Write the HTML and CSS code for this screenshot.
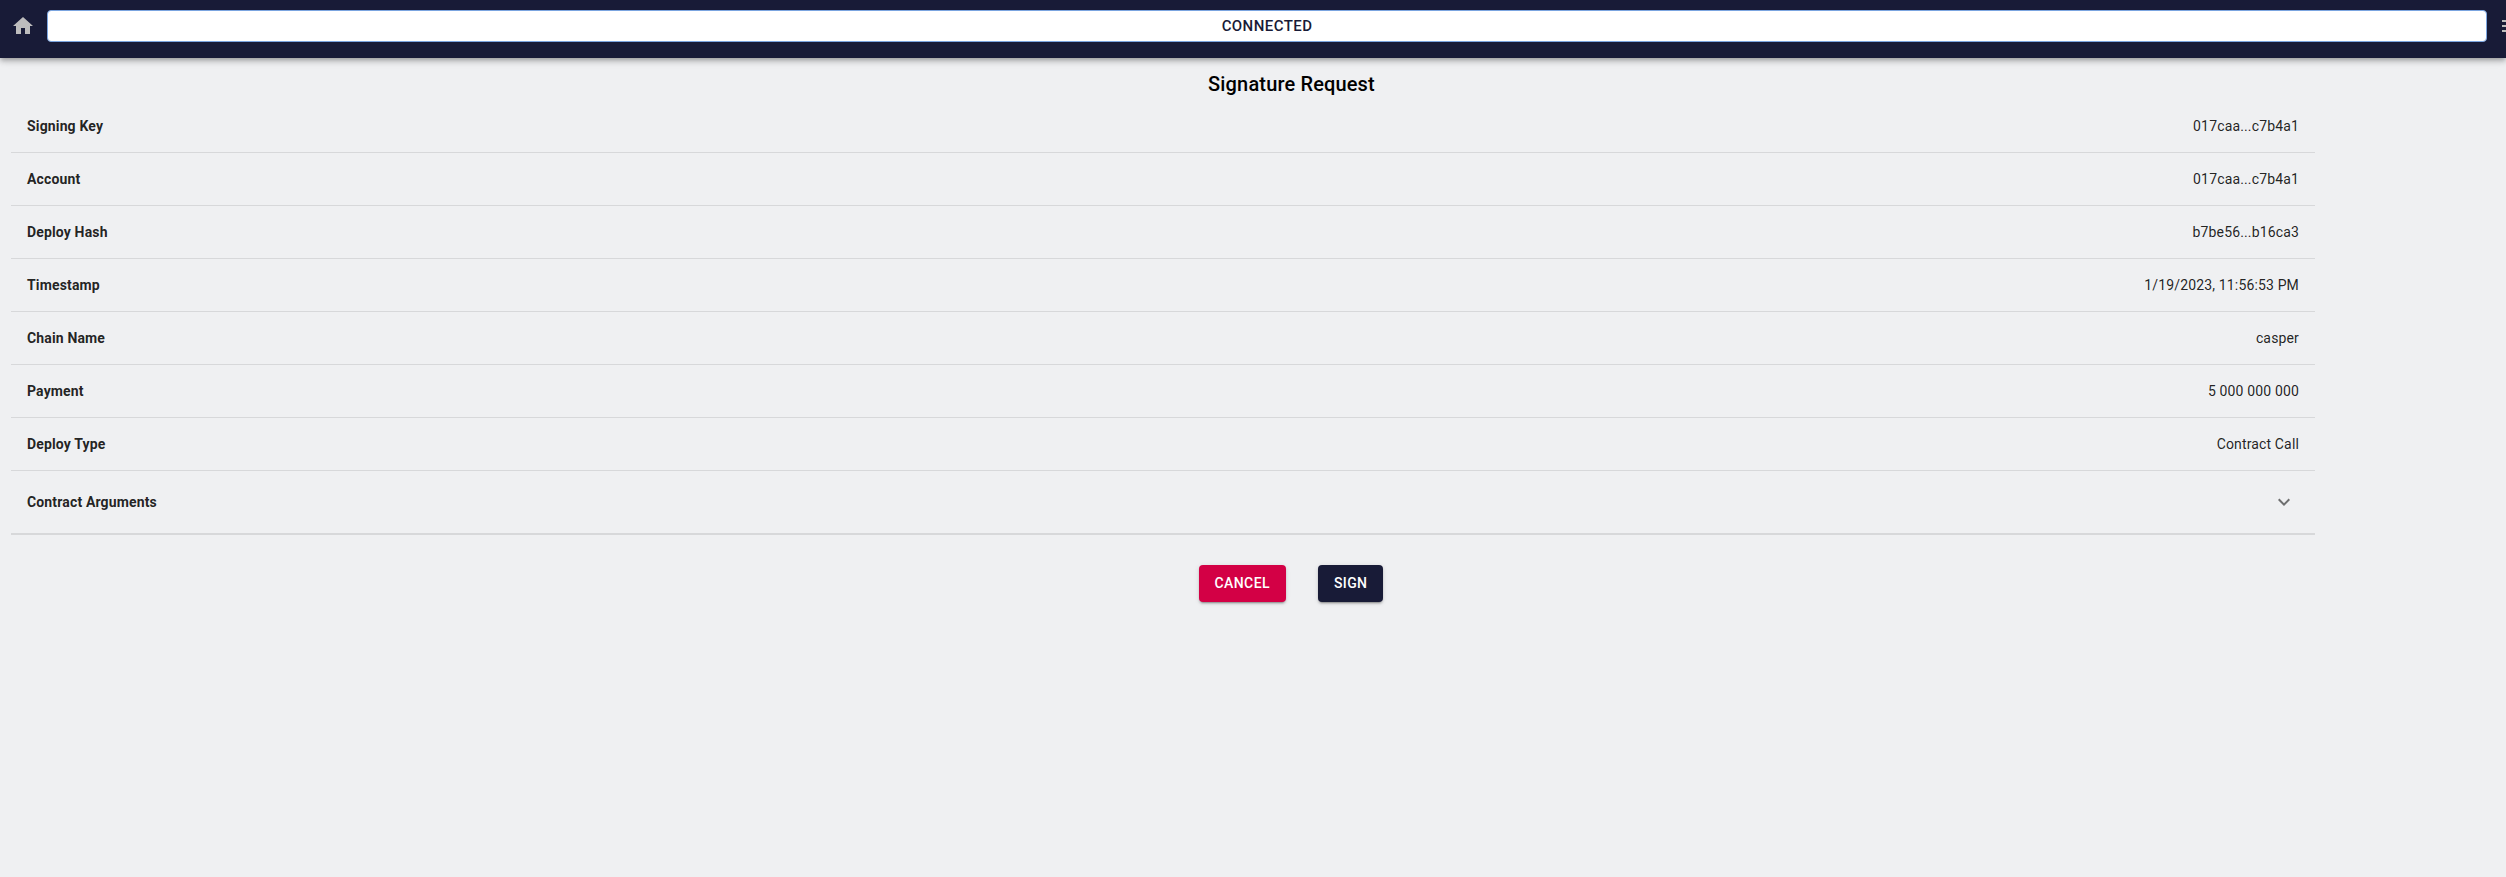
FILE: index.html
```html
<!DOCTYPE html>
<html lang="en">
<head>
<meta charset="utf-8">
<title>Signature Request</title>
<link rel="stylesheet" href="styles.css">
</head>
<body>
<header class="app-bar">
  <svg class="icon" viewBox="0 0 24 24"><path d="M10 20v-6h4v6h5v-8h3L12 3 2 12h3v8z"/></svg>
  <button class="status">CONNECTED</button>
  <svg class="icon" viewBox="0 0 24 24"><path d="M3 18h18v-2H3v2zm0-5h18v-2H3v2zm0-7v2h18V6H3z"/></svg>
</header>
<main class="content">
  <h6 class="title">Signature Request</h6>
  <div class="details">
    <div class="row"><b>Signing Key</b><span>017caa...c7b4a1</span></div>
    <div class="row"><b>Account</b><span>017caa...c7b4a1</span></div>
    <div class="row"><b>Deploy Hash</b><span>b7be56...b16ca3</span></div>
    <div class="row"><b>Timestamp</b><span>1/19/2023, 11:56:53 PM</span></div>
    <div class="row"><b>Chain Name</b><span>casper</span></div>
    <div class="row"><b>Payment</b><span>5 000 000 000</span></div>
    <div class="row"><b>Deploy Type</b><span>Contract Call</span></div>
    <div class="row row-expand"><b>Contract Arguments</b><svg class="chevron" viewBox="0 0 24 24"><path d="M16.59 8.59L12 13.17 7.41 8.59 6 10l6 6 6-6z"/></svg></div>
  </div>
  <div class="actions">
    <button class="btn btn-cancel">CANCEL</button>
    <button class="btn btn-sign">SIGN</button>
  </div>
</main>
</body>
</html>
```
FILE: styles.css
```css
* { box-sizing: border-box; }
body {
  margin: 0;
  min-height: 100vh;
  overflow: hidden;
  background: #eff0f2;
  font-family: Roboto, "Liberation Sans", sans-serif;
}
.app-bar {
  display: flex;
  align-items: flex-start;
  gap: 12px;
  height: 58px;
  padding: 10px 0 0 11px;
  background: #181b37;
  box-shadow: 0 2px 4px -1px rgba(0,0,0,.2), 0 4px 5px 0 rgba(0,0,0,.14), 0 1px 10px 0 rgba(0,0,0,.12);
}
.icon {
  flex: none;
  width: 24px;
  height: 24px;
  margin-top: 4px;
  fill: #bdbdbd;
}
.status {
  flex: none;
  width: 2440px;
  height: 32px;
  padding: 0;
  border: 1px solid #7ba5e0;
  border-radius: 4px;
  background: #fff;
  color: #181b37;
  font: 500 15px/26px Roboto, sans-serif;
  letter-spacing: .02857em;
}
.content { width: 2582px; }
.title {
  margin: 0;
  padding: 10px 0 0 1px;
  height: 42px;
  color: #000;
  font-size: 20px;
  font-weight: 500;
  line-height: 32px;
  letter-spacing: .0075em;
  text-align: center;
}
.details { width: 2304px; margin-left: 11px; }
.row {
  display: flex;
  align-items: center;
  justify-content: space-between;
  height: 53px;
  padding: 0 16px;
  border-bottom: 1px solid #d7d8da;
  color: rgba(0,0,0,.87);
  font-size: 14px;
  line-height: 20px;
  letter-spacing: .01071em;
}
.row b { font-weight: 700; }
.row-expand { height: 64px; padding-right: 19px; border-bottom-width: 2px; }
.chevron { width: 24px; height: 24px; fill: rgba(0,0,0,.54); }
.actions {
  display: flex;
  justify-content: center;
  gap: 32px;
  padding-top: 30px;
}
.btn {
  height: 37px;
  padding: 6px 16px;
  border: 0;
  border-radius: 4px;
  color: #fff;
  font: 500 14px/24.5px Roboto, sans-serif;
  letter-spacing: .02857em;
  box-shadow: 0 3px 1px -2px rgba(0,0,0,.2), 0 2px 2px 0 rgba(0,0,0,.14), 0 1px 5px 0 rgba(0,0,0,.12);
}
.btn-cancel { background: #d30045; }
.btn-sign { background: #181b37; }
```
